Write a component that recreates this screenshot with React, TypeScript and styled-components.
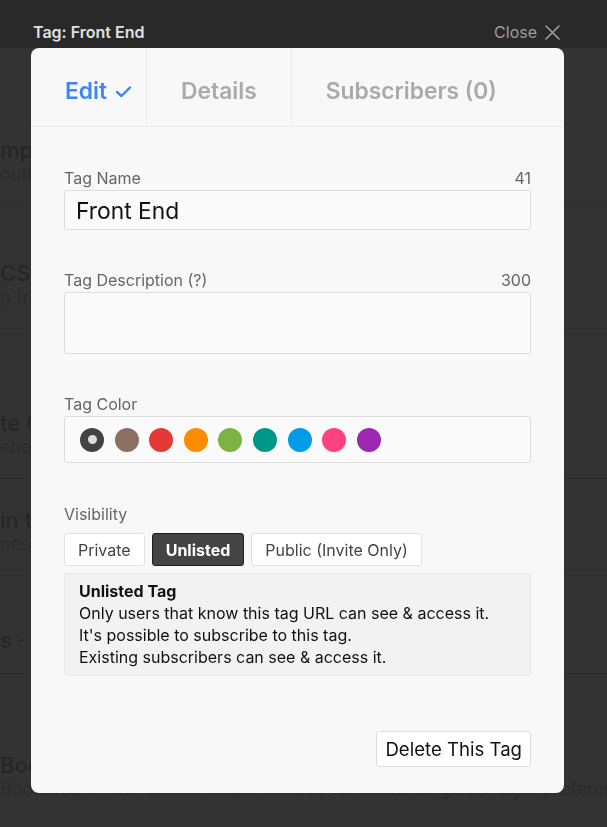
import React, { useState } from "react"
import styled, { createGlobalStyle } from "styled-components"

const GlobalStyle = createGlobalStyle`
  html, body {
    margin: 0;
    padding: 0;
    background: #333333;
    font-family: Inter, "Noto Sans", "Liberation Sans", sans-serif;
  }
  * { box-sizing: border-box; }
`

const COLORS = [
  "#424242",
  "#8d6e63",
  "#e53935",
  "#fb8c00",
  "#7cb342",
  "#009688",
  "#039be5",
  "#ff4081",
  "#9c27b0",
]

// faint list sitting behind the dialog
const BG_ITEMS = [
  { title: "mponents", text: "outline the essentials of building interfaces.", space: 137 },
  { title: " CSS grid", text: "p from the basics to a layout that fills the screen", space: 54 },
  { title: "te Guide to Flexbox and everything", text: "ehension of how things work", space: 81 },
  { title: " in the browser", text: "nes and tools you can learn about", space: 28 },
  { title: "s · learn", text: "", space: 51 },
  { title: "Bootstrap", text: "Bootstrap 4 with our new built-in Sass variables for global style preferences", space: 78 },
]

type VisibilityKind = "private" | "unlisted" | "public"

const App: React.FC = () => {
  const [tab, setTab] = useState<string>("edit")
  const [name, setName] = useState<string>("Front End")
  const [description, setDescription] = useState<string>("")
  const [color, setColor] = useState<string>(COLORS[0])
  const [visibility, setVisibility] = useState<VisibilityKind>("unlisted")

  return (
    <>
      <GlobalStyle />
      <S.Page>
        {BG_ITEMS.map((item, i) => (
          <S.BgItem key={i} space={item.space}>
            <S.BgTitle>{item.title}</S.BgTitle>
            {item.text && <S.BgText>{item.text}</S.BgText>}
          </S.BgItem>
        ))}
      </S.Page>

      <S.Overlay>
        <S.TopBar>
          <S.TopTitle>Tag: Front End</S.TopTitle>
          <S.CloseButton>
            Close
            <svg width="17" height="17" viewBox="0 0 17 17" fill="none" stroke="currentColor" strokeWidth="1.6" strokeLinecap="round">
              <path d="M2 2L15 15M15 2L2 15" />
            </svg>
          </S.CloseButton>
        </S.TopBar>

        <S.Modal>
          <S.Tabs>
            <S.Tab active={tab === "edit"} trailing onClick={() => setTab("edit")}>
              Edit
              <svg width="17" height="13" viewBox="0 0 17 13" fill="none" stroke="currentColor" strokeWidth="2.4" strokeLinecap="round" strokeLinejoin="round">
                <path d="M2 7L6.5 11L15 2.5" />
              </svg>
            </S.Tab>
            <S.Tab active={tab === "details"} onClick={() => setTab("details")}>
              Details
            </S.Tab>
            <S.Tab active={tab === "subscribers"} last onClick={() => setTab("subscribers")}>
              Subscribers (0)
            </S.Tab>
          </S.Tabs>

          <S.Body>
            <S.Field>
              <S.LabelRow>
                <span>Tag Name</span>
                <span>{50 - name.length}</span>
              </S.LabelRow>
              <S.NameInput value={name} onChange={(e) => setName(e.target.value)} />
            </S.Field>

            <S.Field>
              <S.LabelRow>
                <span>Tag Description (?)</span>
                <span>{300 - description.length}</span>
              </S.LabelRow>
              <S.TextArea value={description} onChange={(e) => setDescription(e.target.value)} />
            </S.Field>

            <S.Field>
              <S.LabelRow>
                <span>Tag Color</span>
              </S.LabelRow>
              <S.ColorBox>
                {COLORS.map((c) => (
                  <S.Swatch key={c} swatch={c} selected={c === color} onClick={() => setColor(c)} />
                ))}
              </S.ColorBox>
            </S.Field>

            <S.Field offset={1}>
              <S.LabelRow>
                <span>Visibility</span>
              </S.LabelRow>
              <S.SegmentRow>
                <S.Segment active={visibility === "private"} onClick={() => setVisibility("private")}>Private</S.Segment>
                <S.Segment active={visibility === "unlisted"} onClick={() => setVisibility("unlisted")}>Unlisted</S.Segment>
                <S.Segment active={visibility === "public"} onClick={() => setVisibility("public")}>Public (Invite Only)</S.Segment>
              </S.SegmentRow>
              <S.InfoBox>
                <strong>Unlisted Tag</strong>
                <span>Only users that know this tag URL can see &amp; access it.</span>
                <span>It's possible to subscribe to this tag.</span>
                <span>Existing subscribers can see &amp; access it.</span>
              </S.InfoBox>
            </S.Field>

            <S.Footer>
              <S.DeleteButton>Delete This Tag</S.DeleteButton>
            </S.Footer>
          </S.Body>
        </S.Modal>
      </S.Overlay>
    </>
  )
}

const S = {
  Page: styled.div`
    height: 827px;
    overflow: hidden;
    white-space: nowrap;
    color: #262626;
  `,
  BgItem: styled.div<{ space: number }>`
    padding-top: ${(p) => p.space}px;
    padding-bottom: 20px;
    border-bottom: 1px solid #2f2f2f;
  `,
  BgTitle: styled.div`
    font-size: 22px;
    font-weight: 500;
    line-height: 26px;
  `,
  BgText: styled.div`
    font-size: 18px;
    line-height: 22px;
    color: #2b2b2b;
  `,
  Overlay: styled.div`
    position: fixed;
    inset: 0;
    display: flex;
    flex-direction: column;
    align-items: flex-start;
  `,
  TopBar: styled.div`
    width: 100%;
    height: 48px;
    background: #292929;
    display: flex;
    align-items: center;
    justify-content: space-between;
    padding: 16px 46px 0 33px;
  `,
  TopTitle: styled.div`
    color: #e0e0e0;
    font-size: 16px;
    font-weight: 600;
  `,
  CloseButton: styled.div`
    display: flex;
    align-items: center;
    gap: 7px;
    color: #9e9e9e;
    font-size: 16px;
    cursor: pointer;
  `,
  Modal: styled.div`
    width: 533px;
    margin-left: 31px;
    background: #f8f8f8;
    border-radius: 8px;
    overflow: hidden;
  `,
  Tabs: styled.div`
    display: flex;
    height: 79px;
    border-bottom: 1px solid #ececec;
  `,
  Tab: styled.div<{ active?: boolean; last?: boolean; trailing?: boolean }>`
    display: flex;
    align-items: center;
    gap: 8px;
    padding: 6px ${(p) => (p.trailing ? 14 : 34)}px 0 34px;
    font-size: 22.8px;
    font-weight: 600;
    color: ${(p) => (p.active ? "#3f86f2" : "#aaaaaa")};
    border-right: ${(p) => (p.last ? "none" : "1px solid #ececec")};
    cursor: pointer;
    svg {
      margin-top: 3px;
    }
  `,
  Body: styled.div`
    display: flex;
    flex-direction: column;
    gap: 40px;
    padding: 41px 33px 26px;
  `,
  Field: styled.div<{ offset?: number }>`
    display: flex;
    flex-direction: column;
    margin-top: ${(p) => p.offset ?? 0}px;
  `,
  LabelRow: styled.div`
    display: flex;
    justify-content: space-between;
    font-size: 16px;
    line-height: 20px;
    color: #666666;
    margin-bottom: 2px;
  `,
  NameInput: styled.input`
    height: 40px;
    border: 1px solid #dddddd;
    border-radius: 3px;
    background: #fafafa;
    padding: 0 11px;
    font-family: inherit;
    font-size: 22.8px;
    color: #111111;
    outline: none;
  `,
  TextArea: styled.textarea`
    height: 62px;
    border: 1px solid #dddddd;
    border-radius: 3px;
    background: #fafafa;
    resize: none;
    font-family: inherit;
    font-size: 16px;
    outline: none;
  `,
  ColorBox: styled.div`
    height: 47px;
    display: flex;
    align-items: center;
    gap: 10.6px;
    padding: 0 15px;
    border: 1px solid #dddddd;
    border-radius: 3px;
    background: #fafafa;
  `,
  Swatch: styled.div<{ swatch: string; selected: boolean }>`
    width: 24px;
    height: 24px;
    border-radius: 50%;
    background: ${(p) => p.swatch};
    display: flex;
    align-items: center;
    justify-content: center;
    cursor: pointer;
    &::after {
      content: "";
      display: ${(p) => (p.selected ? "block" : "none")};
      width: 9px;
      height: 9px;
      border-radius: 50%;
      background: #dddddd;
    }
  `,
  SegmentRow: styled.div`
    display: flex;
    gap: 7px;
    margin-top: 7px;
  `,
  Segment: styled.div<{ active: boolean }>`
    height: 33px;
    display: flex;
    align-items: center;
    padding: 0 13px;
    font-size: 16px;
    border-radius: 3px;
    cursor: pointer;
    background: ${(p) => (p.active ? "#444444" : "#ffffff")};
    color: ${(p) => (p.active ? "#ffffff" : "#444444")};
    font-weight: ${(p) => (p.active ? 700 : 400)};
    border: 1px solid ${(p) => (p.active ? "#1e1e1e" : "#e2e2e2")};
  `,
  InfoBox: styled.div`
    margin-top: 7px;
    display: flex;
    flex-direction: column;
    padding: 6px 14px 7px;
    background: #f2f2f2;
    border: 1px solid #e8e8e8;
    border-radius: 3px;
    font-size: 16px;
    line-height: 22px;
    color: #111111;
    strong {
      font-weight: 700;
    }
  `,
  Footer: styled.div`
    display: flex;
    justify-content: flex-end;
    margin-top: 15px;
  `,
  DeleteButton: styled.button`
    height: 36px;
    padding: 0 8px;
    background: #ffffff;
    border: 1px solid #dddddd;
    border-radius: 3px;
    font-family: inherit;
    font-size: 18.6px;
    color: #111111;
    cursor: pointer;
  `,
}

export default App
